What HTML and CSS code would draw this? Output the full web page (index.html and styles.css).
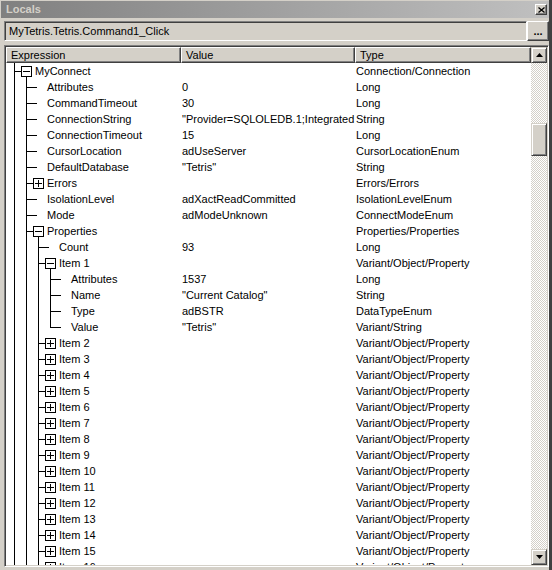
FILE: index.html
```html
<!DOCTYPE html>
<html>
<head>
<meta charset="utf-8">
<title>Locals</title>
<link rel="stylesheet" href="styles.css">
</head>
<body>
<div class="window">
  <div class="titlebar">
    <span class="title">Locals</span>
    <span class="close"><svg width="7" height="6" viewBox="0 0 7 6"><path d="M0.5 0.5 L6.5 5.5 M6.5 0.5 L0.5 5.5" stroke="#000" stroke-width="1.3" fill="none"/></svg></span>
  </div>
  <div class="context">
    <div class="ctx-field">MyTetris.Tetris.Command1_Click</div>
    <div class="ctx-btn">...</div>
  </div>
  <div class="list">
    <div class="list-main">
      <div class="header">
        <div class="hcell">Expression</div>
        <div class="hcell">Value</div>
        <div class="hcell">Type</div>
      </div>
      <div class="rows">
        <div class="row"><div class="cell expr"><span class="g tee"></span><span class="n exp open"><span class="box"></span></span><span class="t">MyConnect</span></div><div class="cell"></div><div class="cell">Connection/Connection</div></div>
        <div class="row"><div class="cell expr"><span class="g pipe"></span><span class="g tee"></span><span class="n leaf"></span><span class="t">Attributes</span></div><div class="cell">0</div><div class="cell">Long</div></div>
        <div class="row"><div class="cell expr"><span class="g pipe"></span><span class="g tee"></span><span class="n leaf"></span><span class="t">CommandTimeout</span></div><div class="cell">30</div><div class="cell">Long</div></div>
        <div class="row"><div class="cell expr"><span class="g pipe"></span><span class="g tee"></span><span class="n leaf"></span><span class="t">ConnectionString</span></div><div class="cell">"Provider=SQLOLEDB.1;Integrated Security=SSPI;Persist Security Info=False"</div><div class="cell">String</div></div>
        <div class="row"><div class="cell expr"><span class="g pipe"></span><span class="g tee"></span><span class="n leaf"></span><span class="t">ConnectionTimeout</span></div><div class="cell">15</div><div class="cell">Long</div></div>
        <div class="row"><div class="cell expr"><span class="g pipe"></span><span class="g tee"></span><span class="n leaf"></span><span class="t">CursorLocation</span></div><div class="cell">adUseServer</div><div class="cell">CursorLocationEnum</div></div>
        <div class="row"><div class="cell expr"><span class="g pipe"></span><span class="g tee"></span><span class="n leaf"></span><span class="t">DefaultDatabase</span></div><div class="cell">"Tetris"</div><div class="cell">String</div></div>
        <div class="row"><div class="cell expr"><span class="g pipe"></span><span class="g tee"></span><span class="n exp"><span class="box plus"></span></span><span class="t">Errors</span></div><div class="cell"></div><div class="cell">Errors/Errors</div></div>
        <div class="row"><div class="cell expr"><span class="g pipe"></span><span class="g tee"></span><span class="n leaf"></span><span class="t">IsolationLevel</span></div><div class="cell">adXactReadCommitted</div><div class="cell">IsolationLevelEnum</div></div>
        <div class="row"><div class="cell expr"><span class="g pipe"></span><span class="g tee"></span><span class="n leaf"></span><span class="t">Mode</span></div><div class="cell">adModeUnknown</div><div class="cell">ConnectModeEnum</div></div>
        <div class="row"><div class="cell expr"><span class="g pipe"></span><span class="g tee"></span><span class="n exp open"><span class="box"></span></span><span class="t">Properties</span></div><div class="cell"></div><div class="cell">Properties/Properties</div></div>
        <div class="row"><div class="cell expr"><span class="g pipe"></span><span class="g pipe"></span><span class="g tee"></span><span class="n leaf"></span><span class="t">Count</span></div><div class="cell">93</div><div class="cell">Long</div></div>
        <div class="row"><div class="cell expr"><span class="g pipe"></span><span class="g pipe"></span><span class="g tee"></span><span class="n exp open"><span class="box"></span></span><span class="t">Item 1</span></div><div class="cell"></div><div class="cell">Variant/Object/Property</div></div>
        <div class="row"><div class="cell expr"><span class="g pipe"></span><span class="g pipe"></span><span class="g pipe"></span><span class="g tee"></span><span class="n leaf"></span><span class="t">Attributes</span></div><div class="cell">1537</div><div class="cell">Long</div></div>
        <div class="row"><div class="cell expr"><span class="g pipe"></span><span class="g pipe"></span><span class="g pipe"></span><span class="g tee"></span><span class="n leaf"></span><span class="t">Name</span></div><div class="cell">"Current Catalog"</div><div class="cell">String</div></div>
        <div class="row"><div class="cell expr"><span class="g pipe"></span><span class="g pipe"></span><span class="g pipe"></span><span class="g tee"></span><span class="n leaf"></span><span class="t">Type</span></div><div class="cell">adBSTR</div><div class="cell">DataTypeEnum</div></div>
        <div class="row"><div class="cell expr"><span class="g pipe"></span><span class="g pipe"></span><span class="g pipe"></span><span class="g ell"></span><span class="n leaf"></span><span class="t">Value</span></div><div class="cell">"Tetris"</div><div class="cell">Variant/String</div></div>
        <div class="row"><div class="cell expr"><span class="g pipe"></span><span class="g pipe"></span><span class="g tee"></span><span class="n exp"><span class="box plus"></span></span><span class="t">Item 2</span></div><div class="cell"></div><div class="cell">Variant/Object/Property</div></div>
        <div class="row"><div class="cell expr"><span class="g pipe"></span><span class="g pipe"></span><span class="g tee"></span><span class="n exp"><span class="box plus"></span></span><span class="t">Item 3</span></div><div class="cell"></div><div class="cell">Variant/Object/Property</div></div>
        <div class="row"><div class="cell expr"><span class="g pipe"></span><span class="g pipe"></span><span class="g tee"></span><span class="n exp"><span class="box plus"></span></span><span class="t">Item 4</span></div><div class="cell"></div><div class="cell">Variant/Object/Property</div></div>
        <div class="row"><div class="cell expr"><span class="g pipe"></span><span class="g pipe"></span><span class="g tee"></span><span class="n exp"><span class="box plus"></span></span><span class="t">Item 5</span></div><div class="cell"></div><div class="cell">Variant/Object/Property</div></div>
        <div class="row"><div class="cell expr"><span class="g pipe"></span><span class="g pipe"></span><span class="g tee"></span><span class="n exp"><span class="box plus"></span></span><span class="t">Item 6</span></div><div class="cell"></div><div class="cell">Variant/Object/Property</div></div>
        <div class="row"><div class="cell expr"><span class="g pipe"></span><span class="g pipe"></span><span class="g tee"></span><span class="n exp"><span class="box plus"></span></span><span class="t">Item 7</span></div><div class="cell"></div><div class="cell">Variant/Object/Property</div></div>
        <div class="row"><div class="cell expr"><span class="g pipe"></span><span class="g pipe"></span><span class="g tee"></span><span class="n exp"><span class="box plus"></span></span><span class="t">Item 8</span></div><div class="cell"></div><div class="cell">Variant/Object/Property</div></div>
        <div class="row"><div class="cell expr"><span class="g pipe"></span><span class="g pipe"></span><span class="g tee"></span><span class="n exp"><span class="box plus"></span></span><span class="t">Item 9</span></div><div class="cell"></div><div class="cell">Variant/Object/Property</div></div>
        <div class="row"><div class="cell expr"><span class="g pipe"></span><span class="g pipe"></span><span class="g tee"></span><span class="n exp"><span class="box plus"></span></span><span class="t">Item 10</span></div><div class="cell"></div><div class="cell">Variant/Object/Property</div></div>
        <div class="row"><div class="cell expr"><span class="g pipe"></span><span class="g pipe"></span><span class="g tee"></span><span class="n exp"><span class="box plus"></span></span><span class="t">Item 11</span></div><div class="cell"></div><div class="cell">Variant/Object/Property</div></div>
        <div class="row"><div class="cell expr"><span class="g pipe"></span><span class="g pipe"></span><span class="g tee"></span><span class="n exp"><span class="box plus"></span></span><span class="t">Item 12</span></div><div class="cell"></div><div class="cell">Variant/Object/Property</div></div>
        <div class="row"><div class="cell expr"><span class="g pipe"></span><span class="g pipe"></span><span class="g tee"></span><span class="n exp"><span class="box plus"></span></span><span class="t">Item 13</span></div><div class="cell"></div><div class="cell">Variant/Object/Property</div></div>
        <div class="row"><div class="cell expr"><span class="g pipe"></span><span class="g pipe"></span><span class="g tee"></span><span class="n exp"><span class="box plus"></span></span><span class="t">Item 14</span></div><div class="cell"></div><div class="cell">Variant/Object/Property</div></div>
        <div class="row"><div class="cell expr"><span class="g pipe"></span><span class="g pipe"></span><span class="g tee"></span><span class="n exp"><span class="box plus"></span></span><span class="t">Item 15</span></div><div class="cell"></div><div class="cell">Variant/Object/Property</div></div>
        <div class="row"><div class="cell expr"><span class="g pipe"></span><span class="g pipe"></span><span class="g tee"></span><span class="n exp"><span class="box plus"></span></span><span class="t">Item 16</span></div><div class="cell"></div><div class="cell">Variant/Object/Property</div></div>
      </div>
    </div>
    <div class="vscroll">
      <div class="sbtn"><svg width="7" height="4" viewBox="0 0 7 4"><polygon points="3.5,0 7,4 0,4" fill="#000"/></svg></div>
      <div class="track"><div class="thumb"></div></div>
      <div class="sbtn"><svg width="7" height="4" viewBox="0 0 7 4"><polygon points="0,0 7,0 3.5,4" fill="#000"/></svg></div>
    </div>
  </div>
</div>
</body>
</html>
```

FILE: styles.css
```css
html, body {
  margin: 0;
  padding: 0;
}
body {
  background: #d4d0c8;
  font-family: "Liberation Sans", Arial, sans-serif;
  font-size: 11px;
  color: #000;
}
.window {
  width: 552px;
  height: 570px;
  box-sizing: border-box;
  padding: 1px 0 0 1px;
  border-right: 3px solid #404040;
  display: flex;
  flex-direction: column;
  overflow: hidden;
}
.titlebar {
  height: 17px;
  flex: none;
  background: linear-gradient(to right, #808080, #c0c0c0);
  display: flex;
  align-items: center;
  justify-content: space-between;
}
.title {
  font-weight: bold;
  color: #d4d0c8;
  padding-left: 5px;
  line-height: 17px;
}
.close {
  width: 12px;
  height: 11px;
  box-sizing: border-box;
  margin-right: 2px;
  background: #d4d0c8;
  border: 1px solid;
  border-color: #fff #404040 #404040 #fff;
  box-shadow: inset -1px -1px #808080;
  display: flex;
  align-items: center;
  justify-content: center;
}
.close svg {
  display: block;
}
.context {
  display: flex;
  flex: none;
  height: 20px;
  margin: 3px 0 0 3px;
}
.ctx-field {
  flex: 1;
  box-sizing: border-box;
  border: 1px solid;
  border-color: #808080 #fff #fff #808080;
  box-shadow: inset 1px 1px #404040, inset -1px -1px #d4d0c8;
  padding-left: 4px;
  line-height: 18px;
  white-space: nowrap;
  overflow: hidden;
}
.ctx-btn {
  width: 22px;
  flex: none;
  box-sizing: border-box;
  border: 1px solid;
  border-color: #fff #404040 #404040 #fff;
  box-shadow: inset -1px -1px #808080;
  font-weight: bold;
  text-align: center;
  line-height: 18px;
  letter-spacing: 0;
}
.list {
  flex: none;
  height: 522px;
  margin: 4px 0 0 3px;
  box-sizing: border-box;
  border: 1px solid;
  border-color: #808080 #fff #fff #808080;
  padding: 1px;
  box-shadow: inset 1px 1px #404040, inset -1px -1px #d4d0c8;
  display: flex;
}
.list-main {
  width: 525px;
  flex: none;
  display: flex;
  flex-direction: column;
  background: #fff;
}
.header {
  display: grid;
  grid-template-columns: 175px 174px 176px;
  height: 16px;
  flex: none;
}
.hcell {
  box-sizing: border-box;
  background: #d4d0c8;
  border: 1px solid;
  border-color: #fff #404040 #404040 #fff;
  box-shadow: inset -1px -1px #808080;
  padding-left: 4px;
  line-height: 14px;
  white-space: nowrap;
  overflow: hidden;
}
.rows {
  height: 502px;
  overflow: hidden;
}
.row {
  display: grid;
  grid-template-columns: 175px 174px 176px;
  height: 16px;
  line-height: 16px;
}
.cell {
  overflow: hidden;
  white-space: nowrap;
  padding-left: 1px;
}
.expr {
  display: flex;
  padding-left: 2px;
}
.g, .n {
  flex: none;
  width: 12px;
  height: 16px;
  background-repeat: no-repeat;
}
.pipe {
  background-image: linear-gradient(#000, #000);
  background-position: 6px 0;
  background-size: 1px 16px;
}
.tee {
  background-image: linear-gradient(#000, #000), linear-gradient(#000, #000);
  background-position: 6px 0, 6px 8px;
  background-size: 1px 16px, 6px 1px;
}
.ell {
  background-image: linear-gradient(#000, #000), linear-gradient(#000, #000);
  background-position: 6px 0, 6px 8px;
  background-size: 1px 9px, 6px 1px;
}
.leaf {
  background-image: linear-gradient(#000, #000);
  background-position: 0 8px;
  background-size: 5px 1px;
}
.exp {
  display: flex;
  align-items: flex-start;
  background-image: linear-gradient(#000, #000);
  background-position: 0 8px;
  background-size: 1px 1px;
}
.exp.open {
  background-image: linear-gradient(#000, #000), linear-gradient(#000, #000);
  background-position: 0 8px, 6px 14px;
  background-size: 1px 1px, 1px 2px;
}
.box {
  width: 11px;
  height: 11px;
  box-sizing: border-box;
  margin: 3px 0 0 1px;
  border: 1px solid #000;
  background: linear-gradient(#000, #000) center / 7px 1px no-repeat, #fff;
}
.box.plus {
  background: linear-gradient(#000, #000) center / 7px 1px no-repeat,
              linear-gradient(#000, #000) center / 1px 7px no-repeat,
              #fff;
}
.t {
  margin-left: 3px;
  white-space: nowrap;
}
.vscroll {
  width: 16px;
  flex: none;
  display: flex;
  flex-direction: column;
}
.sbtn, .thumb {
  box-sizing: border-box;
  background: #d4d0c8;
  border: 1px solid;
  border-color: #d4d0c8 #404040 #404040 #d4d0c8;
  box-shadow: inset 1px 1px #fff, inset -1px -1px #808080;
}
.sbtn {
  height: 16px;
  flex: none;
  display: flex;
  align-items: center;
  justify-content: center;
}
.sbtn svg {
  display: block;
}
.track {
  flex: 1;
  background-image: conic-gradient(#fff 0 25%, #d4d0c8 0 50%, #fff 0 75%, #d4d0c8 0);
  background-size: 2px 2px;
}
.thumb {
  margin-top: 60px;
  height: 33px;
}
```
